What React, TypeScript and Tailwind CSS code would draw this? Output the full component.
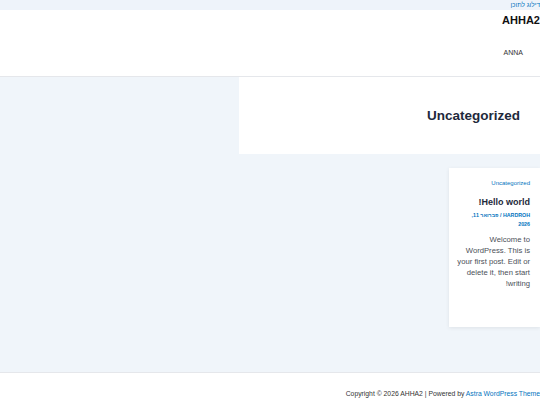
import React from 'react';

const App: React.FC = () => {
  return (
    <div dir="rtl" className="w-[540px] h-[405px] overflow-hidden bg-white font-['Liberation_Sans',Arial,sans-serif] text-[#3a3a3a]">
      <div className="h-[10px] bg-[#eef3fa] flex items-center">
        <a className="text-[6.5px] leading-none text-[#0274be] whitespace-nowrap">דילוג לתוכן</a>
      </div>

      <header className="h-[67px] border-b border-[#e5e7eb] flex flex-col items-start">
        <div className="pt-[4px] text-[11px] font-bold leading-[13px] text-[#111]">AHHA2</div>
        <nav className="mt-[21px] pr-[17px] text-[7px] leading-[10px] text-[#333]">ANNA</nav>
      </header>

      <main className="h-[295px] bg-[#f0f5fa]">
        <section className="w-[301px] h-[77px] bg-white flex items-center pr-[20px]">
          <h1 className="text-[13.5px] font-bold text-[#1e293b] leading-none">Uncategorized</h1>
        </section>

        <article className="mt-[14px] w-[91px] h-[159px] bg-white shadow-[0_1px_4px_rgba(0,0,0,0.08)] pr-[10px] pt-[11px] text-right">
          <div className="w-[74px]">
            <div className="text-[6px] leading-[8px] text-[#0274be]">Uncategorized</div>
            <h2 className="mt-[10px] text-[9px] font-bold leading-[11px] text-[#1e293b]">Hello world!</h2>
            <div className="mt-[3px] w-[62px] text-[5.3px] font-bold leading-[9px] text-[#0274be]">
              HARDROH / פברואר 11, 2026
            </div>
            <p className="mt-[5px] text-[7.7px] leading-[11px] text-[#4b4f58]">
              Welcome to WordPress. This is your first post. Edit or delete it, then start writing!
            </p>
          </div>
        </article>
      </main>

      <footer className="border-t border-[#e5e7eb] h-[33px] flex items-center pt-[10px]">
        <div className="text-[6.8px] leading-[10px] text-[#333] whitespace-nowrap">
          Copyright © 2026 AHHA2 | Powered by <a className="text-[#0274be]">Astra WordPress Theme</a>
        </div>
      </footer>
    </div>
  );
};

export default App;
